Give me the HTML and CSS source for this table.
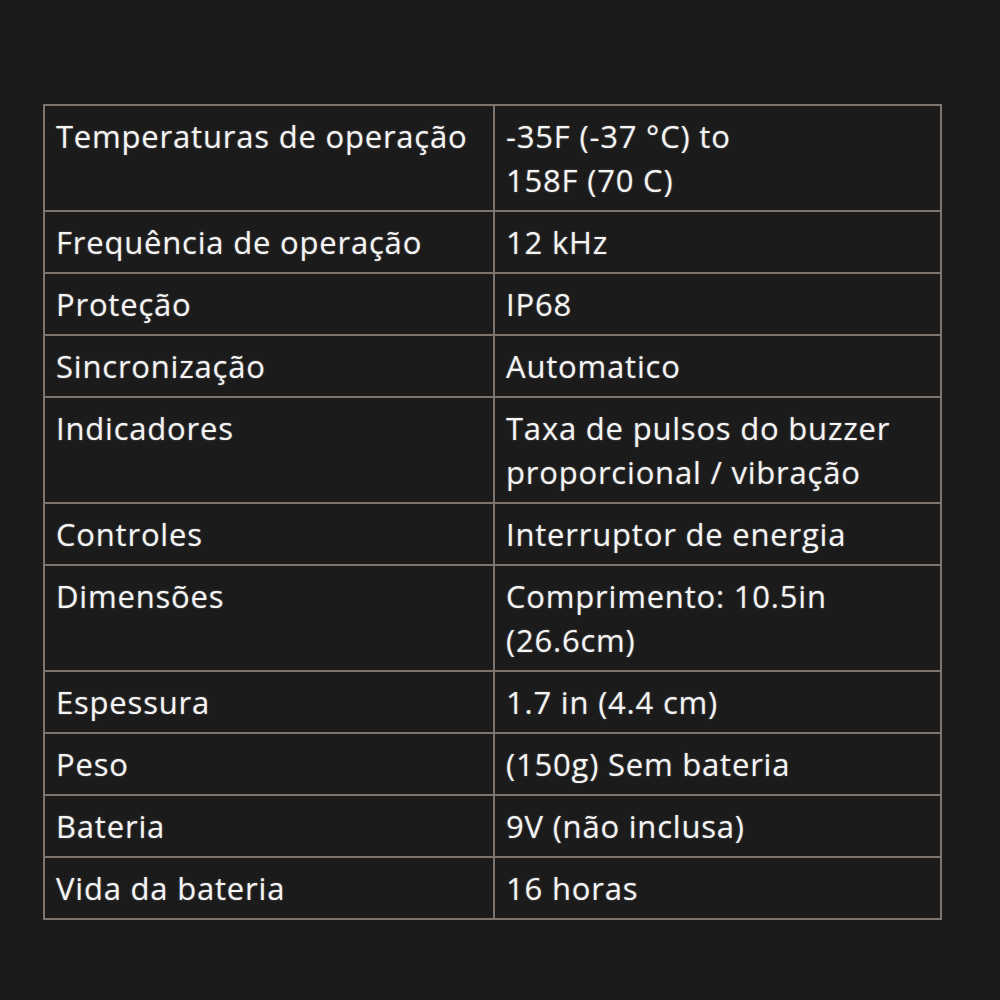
FILE: index.html
```html
<!DOCTYPE html>
<html lang="pt">
<head>
<meta charset="utf-8">
<title>Especificações</title>
<link rel="stylesheet" href="styles.css">
</head>
<body>
<main class="page">
  <table class="specs">
    <colgroup><col class="c1"><col class="c2"></colgroup>
    <tbody>
      <tr><td>Temperaturas de operação</td><td>-35F (-37 °C) to<br>158F (70 C)</td></tr>
      <tr><td>Frequência de operação</td><td>12 kHz</td></tr>
      <tr><td>Proteção</td><td>IP68</td></tr>
      <tr><td>Sincronização</td><td>Automatico</td></tr>
      <tr><td>Indicadores</td><td>Taxa de pulsos do buzzer<br>proporcional / vibração</td></tr>
      <tr><td>Controles</td><td>Interruptor de energia</td></tr>
      <tr><td>Dimensões</td><td>Comprimento: 10.5in<br>(26.6cm)</td></tr>
      <tr><td>Espessura</td><td>1.7 in (4.4 cm)</td></tr>
      <tr><td>Peso</td><td>(150g) Sem bateria</td></tr>
      <tr><td>Bateria</td><td>9V (não inclusa)</td></tr>
      <tr><td>Vida da bateria</td><td>16 horas</td></tr>
    </tbody>
  </table>
</main>
</body>
</html>
```
FILE: styles.css
```css
html, body {
  margin: 0;
  padding: 0;
  background: #1c1b1b;
}
.page {
  padding: 104px 0 0 43px;
}
.specs {
  border-collapse: collapse;
  width: 899px;
  table-layout: fixed;
  font-family: "Open Sans", "Liberation Sans", sans-serif;
  font-size: 31px;
  letter-spacing: 0.8px;
  line-height: 44px;
  color: #f5f5f5;
}
.specs .c1 { width: 450px; }
.specs td {
  border: 2px solid #7d746d;
  padding: 8px 12px 8px 11px;
  vertical-align: top;
  white-space: nowrap;
  text-shadow: 0 0 2px rgba(255, 255, 255, 0.35);
}
```
